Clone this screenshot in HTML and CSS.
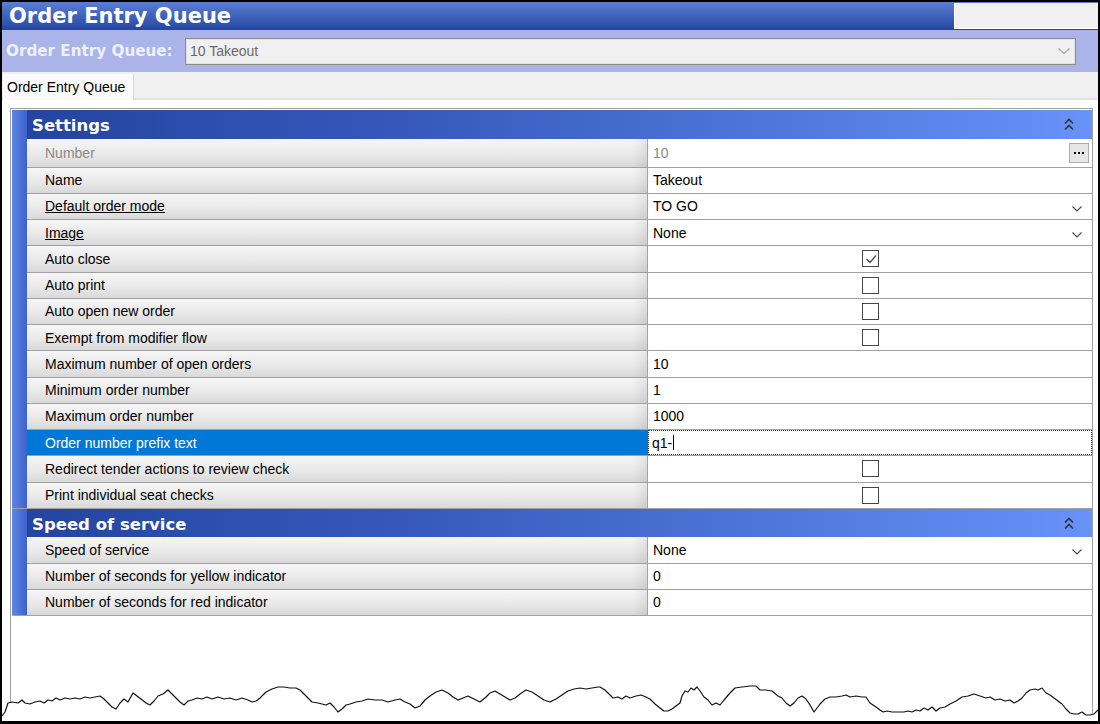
FILE: index.html
```html
<!DOCTYPE html>
<html>
<head>
<meta charset="utf-8">
<title>Order Entry Queue</title>
<link rel="stylesheet" href="styles.css">
</head>
<body>
<div class="window">
  <div class="titlebar">
    <h1 class="title">Order Entry Queue</h1>
    <div class="title-blank"></div>
  </div>
  <div class="selector">
    <div class="selector-label">Order Entry Queue:</div>
    <div class="combo">
      <span>10 Takeout</span>
      <svg class="combo-chev" width="12" height="6" viewBox="0 0 12 6"><polyline points="0.5,0.5 6,5.5 11.5,0.5" fill="none" stroke="#a6a6a6" stroke-width="1.2"/></svg>
    </div>
  </div>
  <div class="tabs">
    <div class="tab">Order Entry Queue</div>
  </div>
  <div class="content">
    <div class="grid">
      <div class="category">
        <div class="strip"></div>
        <div class="cat-body">
          <div class="cat-header"><span>Settings</span>
            <svg class="collapse" width="10" height="13" viewBox="0 0 10 13"><polyline points="1,5.5 5,1.5 9,5.5" fill="none" stroke="#2e3442" stroke-width="1.6"/><polyline points="1,11.5 5,7.5 9,11.5" fill="none" stroke="#2e3442" stroke-width="1.6"/></svg>
          </div>
          <div class="row row-tall">
            <div class="label disabled">Number</div>
            <div class="value spread"><span class="disabled">10</span><span class="ellipsis"><i></i><i></i><i></i></span></div>
          </div>
          <div class="row">
            <div class="label">Name</div>
            <div class="value">Takeout</div>
          </div>
          <div class="row">
            <div class="label"><u>Default order mode</u></div>
            <div class="value spread"><span>TO GO</span><svg class="dd" width="10" height="6" viewBox="0 0 10 6"><polyline points="0.5,0.5 5,5 9.5,0.5" fill="none" stroke="#4d4d4d" stroke-width="1.2"/></svg></div>
          </div>
          <div class="row">
            <div class="label"><u>Image</u></div>
            <div class="value spread"><span>None</span><svg class="dd" width="10" height="6" viewBox="0 0 10 6"><polyline points="0.5,0.5 5,5 9.5,0.5" fill="none" stroke="#4d4d4d" stroke-width="1.2"/></svg></div>
          </div>
          <div class="row">
            <div class="label">Auto close</div>
            <div class="value center"><span class="check"><svg width="14" height="14" viewBox="0 0 14 14"><polyline points="2.5,7 6,10.5 12,3.5" fill="none" stroke="#4a4a4a" stroke-width="1.3"/></svg></span></div>
          </div>
          <div class="row">
            <div class="label">Auto print</div>
            <div class="value center"><span class="check"></span></div>
          </div>
          <div class="row">
            <div class="label">Auto open new order</div>
            <div class="value center"><span class="check"></span></div>
          </div>
          <div class="row">
            <div class="label">Exempt from modifier flow</div>
            <div class="value center"><span class="check"></span></div>
          </div>
          <div class="row">
            <div class="label">Maximum number of open orders</div>
            <div class="value">10</div>
          </div>
          <div class="row">
            <div class="label">Minimum order number</div>
            <div class="value">1</div>
          </div>
          <div class="row">
            <div class="label">Maximum order number</div>
            <div class="value">1000</div>
          </div>
          <div class="row selected">
            <div class="label">Order number prefix text</div>
            <div class="value editing">q1-<span class="caret"></span></div>
          </div>
          <div class="row">
            <div class="label">Redirect tender actions to review check</div>
            <div class="value center"><span class="check"></span></div>
          </div>
          <div class="row">
            <div class="label">Print individual seat checks</div>
            <div class="value center"><span class="check"></span></div>
          </div>
        </div>
      </div>
      <div class="category">
        <div class="strip"></div>
        <div class="cat-body">
          <div class="cat-header"><span>Speed of service</span>
            <svg class="collapse" width="10" height="13" viewBox="0 0 10 13"><polyline points="1,5.5 5,1.5 9,5.5" fill="none" stroke="#2e3442" stroke-width="1.6"/><polyline points="1,11.5 5,7.5 9,11.5" fill="none" stroke="#2e3442" stroke-width="1.6"/></svg>
          </div>
          <div class="row row-speed">
            <div class="label">Speed of service</div>
            <div class="value spread"><span>None</span><svg class="dd" width="10" height="6" viewBox="0 0 10 6"><polyline points="0.5,0.5 5,5 9.5,0.5" fill="none" stroke="#4d4d4d" stroke-width="1.2"/></svg></div>
          </div>
          <div class="row row-speed">
            <div class="label">Number of seconds for yellow indicator</div>
            <div class="value">0</div>
          </div>
          <div class="row row-speed">
            <div class="label">Number of seconds for red indicator</div>
            <div class="value">0</div>
          </div>
        </div>
      </div>
    </div>
  </div>
  <svg class="torn" width="1096" height="44" viewBox="2 677 1096 44">
    <polygon fill="#fff" points="2,716 5,712 8,703 12,702 18,703 22,700 25,703 30,704 35,702 40,701 44,703 48,700 52,701 56,698 60,700 65,698 70,699 75,698 80,699 85,697 90,698 95,697 100,696 104,699 108,703 112,707 116,709 120,703 124,699 128,702 133,693 137,696 141,699 146,703 150,705 154,701 158,696 163,694 168,690 172,694 176,698 180,702 184,705 188,701 192,700 197,698 202,699 207,697 212,699 218,697 224,699 230,698 236,700 242,698 248,700 252,702 256,701 260,698 266,692 272,689 278,687 284,687 290,688 296,688 300,690 304,694 308,698 312,702 318,703 322,704 326,705 330,703 334,707 338,712 342,709 346,705 350,704 356,702 362,701 368,699 375,700 382,700 388,702 395,700 400,699 405,702 410,704 415,708 420,706 425,700 430,696 436,692 442,690 448,693 453,697 458,700 463,698 468,696 474,699 480,702 486,697 490,693 495,691 500,694 505,697 510,700 515,698 520,694 526,690 532,692 538,696 544,700 550,702 556,699 562,695 568,691 574,689 580,688 586,689 592,688 598,687 600,687 605,690 610,695 613,698 618,697 622,699 626,696 630,698 636,696 641,695 646,697 650,699 655,704 660,708 664,711 668,711 672,709 676,706 680,703 682,696 685,691 688,692 691,688 694,690 697,687 700,691 704,697 708,700 712,705 716,703 720,705 724,700 730,693 735,688 742,687 750,686 756,686 760,690 766,690 772,691 778,696 782,698 786,703 790,706 794,703 798,698 802,696 806,699 810,705 814,712 817,708 820,704 825,699 830,697 836,697 842,696 846,695 850,697 856,696 862,697 866,697 870,703 876,707 880,710 883,712 887,711 892,712 898,712 904,712 908,711 912,712 916,710 920,711 924,708 928,710 932,707 936,711 940,708 945,707 950,704 956,701 962,697 968,696 974,694 980,696 986,698 990,697 995,700 1000,699 1005,701 1010,700 1014,703 1018,701 1022,698 1026,693 1030,690 1035,689 1038,690 1042,688 1046,693 1050,695 1054,698 1058,701 1062,704 1066,709 1070,713 1074,714 1078,714 1082,712 1086,715 1090,715 1094,714 1098,710 1098,721 2,721"/>
    <polyline fill="none" stroke="#111" stroke-width="1.2" stroke-linejoin="round" points="2,716 5,712 8,703 12,702 18,703 22,700 25,703 30,704 35,702 40,701 44,703 48,700 52,701 56,698 60,700 65,698 70,699 75,698 80,699 85,697 90,698 95,697 100,696 104,699 108,703 112,707 116,709 120,703 124,699 128,702 133,693 137,696 141,699 146,703 150,705 154,701 158,696 163,694 168,690 172,694 176,698 180,702 184,705 188,701 192,700 197,698 202,699 207,697 212,699 218,697 224,699 230,698 236,700 242,698 248,700 252,702 256,701 260,698 266,692 272,689 278,687 284,687 290,688 296,688 300,690 304,694 308,698 312,702 318,703 322,704 326,705 330,703 334,707 338,712 342,709 346,705 350,704 356,702 362,701 368,699 375,700 382,700 388,702 395,700 400,699 405,702 410,704 415,708 420,706 425,700 430,696 436,692 442,690 448,693 453,697 458,700 463,698 468,696 474,699 480,702 486,697 490,693 495,691 500,694 505,697 510,700 515,698 520,694 526,690 532,692 538,696 544,700 550,702 556,699 562,695 568,691 574,689 580,688 586,689 592,688 598,687 600,687 605,690 610,695 613,698 618,697 622,699 626,696 630,698 636,696 641,695 646,697 650,699 655,704 660,708 664,711 668,711 672,709 676,706 680,703 682,696 685,691 688,692 691,688 694,690 697,687 700,691 704,697 708,700 712,705 716,703 720,705 724,700 730,693 735,688 742,687 750,686 756,686 760,690 766,690 772,691 778,696 782,698 786,703 790,706 794,703 798,698 802,696 806,699 810,705 814,712 817,708 820,704 825,699 830,697 836,697 842,696 846,695 850,697 856,696 862,697 866,697 870,703 876,707 880,710 883,712 887,711 892,712 898,712 904,712 908,711 912,712 916,710 920,711 924,708 928,710 932,707 936,711 940,708 945,707 950,704 956,701 962,697 968,696 974,694 980,696 986,698 990,697 995,700 1000,699 1005,701 1010,700 1014,703 1018,701 1022,698 1026,693 1030,690 1035,689 1038,690 1042,688 1046,693 1050,695 1054,698 1058,701 1062,704 1066,709 1070,713 1074,714 1078,714 1082,712 1086,715 1090,715 1094,714 1098,710"/>
  </svg>
</div>
</body>
</html>
```
FILE: styles.css
```css
* { box-sizing: border-box; }
html, body { margin: 0; padding: 0; height: 100%; }
body {
  background: #000;
  font-family: "Liberation Sans", Arial, sans-serif;
  font-size: 14px;
  color: #000;
}
.window {
  position: relative;
  margin: 2px 2px 3px 2px;
  height: 719px;
  background: #fff;
  display: flex;
  flex-direction: column;
  overflow: hidden;
}
.titlebar {
  flex: none;
  height: 28px;
  display: flex;
  align-items: flex-start;
  background: linear-gradient(#5b7fd3, #2446a1);
}
.title {
  flex: 1;
  margin: 0;
  padding: 1px 0 0 7px;
  font: bold 21px/26px "DejaVu Sans", Verdana, sans-serif;
  color: #fff;
}
.title-blank {
  width: 144px;
  height: 26px;
  margin-top: 1px;
  background: #f0f0f0;
  border-left: 1px solid #fff;
  border-bottom: 1px solid #fff;
}
.selector {
  flex: none;
  height: 42px;
  display: flex;
  align-items: center;
  padding: 0 22px 0 4px;
  background: #aab4e9;
}
.selector-label {
  width: 179px;
  font: bold 15.2px "DejaVu Sans", Verdana, sans-serif;
  color: #eef0fc;
}
.combo {
  flex: 1;
  height: 27px;
  display: flex;
  align-items: center;
  justify-content: space-between;
  padding: 0 5px 0 4px;
  background: #f0f0f0;
  border: 1px solid #8d8d8d;
  box-shadow: inset 0 0 0 1px #e2e2e2;
  color: #6a6a6a;
}
.tabs {
  flex: none;
  height: 28px;
  display: flex;
  align-items: flex-end;
  background: #f0f0f0;
  border-bottom: 2px solid #e2e2e2;
}
.tab {
  height: 26px;
  margin: 0 0 -2px 1px;
  padding: 0 8px 0 4px;
  display: flex;
  align-items: center;
  background: #fafafa;
  border-right: 1px solid #d9d9d9;
}
.content {
  flex: 1;
  display: flex;
  flex-direction: column;
}
.grid {
  flex: 1;
  margin: 8px 5px 0 8px;
  padding: 1px 0 0 1px;
  border: 1px solid #a0a0a0;
  border-bottom: none;
}
.category {
  display: flex;
}
.strip {
  width: 15px;
  flex: none;
  background: linear-gradient(90deg, #5f85e6, #3d62cc);
  border-bottom: 1px solid #a0a0a0;
}
.cat-body {
  flex: 1;
}
.cat-header {
  height: 28.5px;
  display: flex;
  align-items: center;
  justify-content: space-between;
  padding: 3px 18px 0 5px;
  background: linear-gradient(90deg, #23459e 0%, #3658bd 35%, #4b72d6 65%, #6892f8 100%);
  color: #fff;
  font: bold 16.5px "DejaVu Sans", Verdana, sans-serif;
}
.cat-header .collapse {
  margin-top: -3px;
}
.row {
  display: flex;
  height: 26.25px;
  border-bottom: 1px solid #a0a0a0;
}
.row-tall { height: 29px; }
.row-speed { height: 26.3px; }
.label {
  width: 621px;
  flex: none;
  display: flex;
  align-items: center;
  padding: 0 0 0 18px;
  border-right: 1px solid #a3a3a3;
  background:
    linear-gradient(90deg, rgba(0,0,0,0) calc(100% - 14px), rgba(0,0,0,0.07)),
    linear-gradient(#f6f6f6, #e9e9e9 55%, #d9d9d9);
}
.value {
  flex: 1;
  display: flex;
  align-items: center;
  padding: 0 0 0 5px;
  background: #fff;
}
.value.spread {
  justify-content: space-between;
  padding-right: 10px;
}
.row-tall .value.spread {
  padding: 0 3px 0 5px;
}
.value.center {
  justify-content: center;
  padding: 0 0 0 1px;
}
.disabled { color: #8a8a8a; }
.dd { margin-top: 5px; }
.ellipsis {
  width: 20px;
  height: 20px;
  display: flex;
  align-items: center;
  justify-content: center;
  gap: 2px;
  background: #e6e6e6;
  border: 1px solid #adadad;
}
.ellipsis i {
  width: 2px;
  height: 2px;
  background: #000;
}
.check {
  width: 17px;
  height: 17px;
  display: flex;
  align-items: center;
  justify-content: center;
  border: 1.5px solid #454545;
  background: #fff;
}
.selected .label {
  background: #0078d7;
  color: #fff;
  border-right-color: #0078d7;
}
.value.editing {
  outline: 1px dotted #333;
  outline-offset: -1px;
  padding-left: 4px;
}
.caret {
  display: inline-block;
  width: 1px;
  height: 15px;
  margin-left: 1px;
  background: #000;
}
.torn {
  position: absolute;
  left: 0;
  bottom: 0;
}
```
